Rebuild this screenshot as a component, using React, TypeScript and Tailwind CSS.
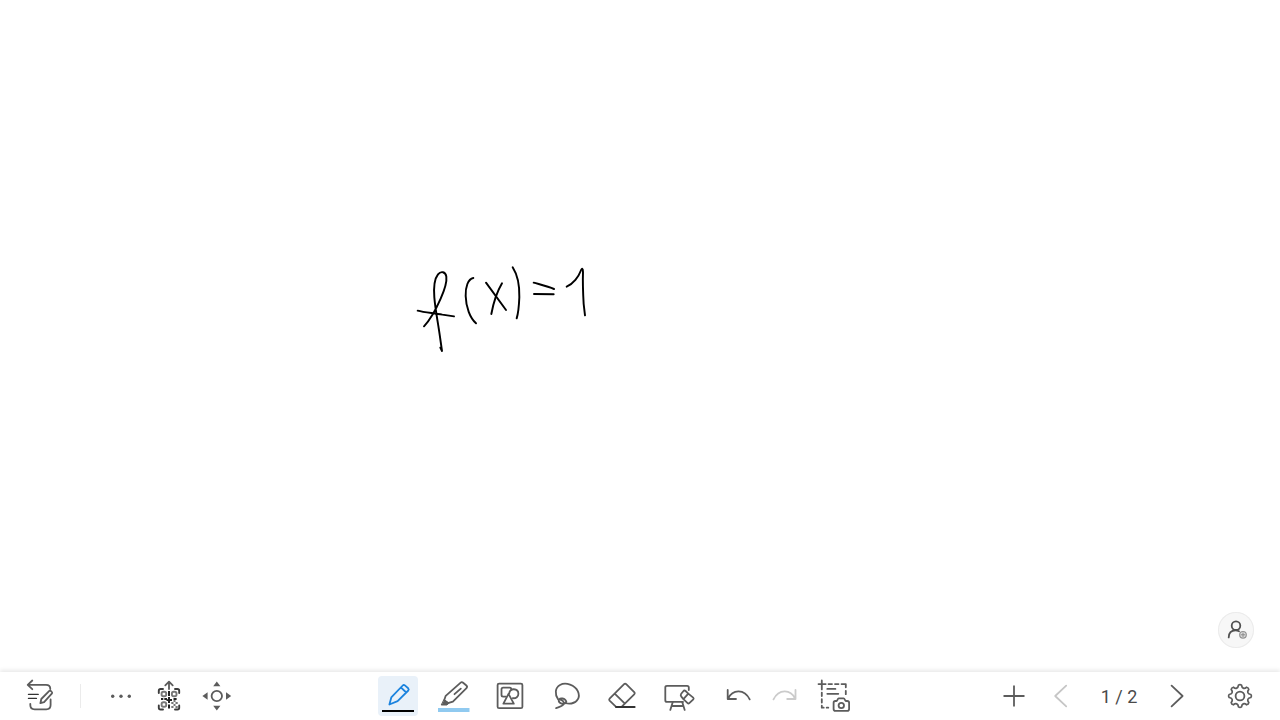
import type { ReactNode } from "react";

type ToolProps = {
  label: string;
  children: ReactNode;
  className?: string;
  disabled?: boolean;
};

function Tool({ label, children, className = "text-[#5c5c5c]", disabled }: ToolProps) {
  return (
    <button
      type="button"
      aria-label={label}
      disabled={disabled}
      className={`h-10 w-10 shrink-0 rounded-[4px] ${className}`}
    >
      <svg
        viewBox="0 0 40 40"
        className="block h-10 w-10"
        fill="none"
        stroke="currentColor"
        strokeWidth="1.8"
        strokeLinecap="round"
        strokeLinejoin="round"
        aria-hidden="true"
      >
        {children}
      </svg>
    </button>
  );
}

const gearPoint = (degrees: number, radius: number) => {
  const angle = (degrees * Math.PI) / 180;
  return `${(20 + radius * Math.sin(angle)).toFixed(2)} ${(20 - radius * Math.cos(angle)).toFixed(2)}`;
};

// Eight rounded teeth joined by concave valleys.
const gearPath = (() => {
  let path = `M${gearPoint(-8, 11)}`;
  for (let tooth = 0; tooth < 8; tooth++) {
    const at = tooth * 45;
    path += `Q${gearPoint(at, 12)} ${gearPoint(at + 8, 11)}`;
    path += `C${gearPoint(at + 14, 7.9)} ${gearPoint(at + 31, 7.9)} ${gearPoint(at + 37, 11)}`;
  }
  return `${path}Z`;
})();

function Handwriting() {
  return (
    <svg
      viewBox="0 0 570 300"
      role="img"
      aria-label="f(x) = 1"
      className="absolute top-[260px] left-[410px] h-[100px] w-[190px]"
      fill="none"
      stroke="#000"
      strokeWidth="5.8"
      strokeLinecap="round"
      strokeLinejoin="round"
    >
      <path d="M42 199C62 178 78 148 92 116C104 89 111 65 109 50C107 34 92 33 84 43C72 58 71 86 73 112C76 150 84 187 89 224L96 273L91 263" />
      <path d="M23 152C45 158 72 159 97 164L132 169" />
      <path d="M190 54C174 57 166 81 167 108C168 142 180 174 198 190" />
      <path d="M228 68L288 150" />
      <path d="M276 70C260 97 250 130 244 162" />
      <path d="M308 22C322 44 329 78 328 112C327 137 325 160 320 175" />
      <path d="M371 68C392 74 414 79 432 87M372 102L431 103" />
      <path d="M470 80C490 71 506 50 512 33C516 23 519 25 519 36C518 65 519 98 521 132L525 166" />
    </svg>
  );
}

export default function App() {
  return (
    <div className="flex min-h-screen flex-col bg-white font-['Roboto','Liberation_Sans',sans-serif]">
      <main className="relative flex flex-1 items-end justify-end">
        <Handwriting />
        <button
          type="button"
          aria-label="Add participant"
          className="mr-[26px] mb-6 h-9 w-9 rounded-full bg-[#f7f7f7] text-[#505050] ring-1 ring-[#ebebeb] ring-inset"
        >
          <svg
            viewBox="0 0 36 36"
            className="block h-9 w-9"
            fill="none"
            stroke="currentColor"
            strokeWidth="1.8"
            strokeLinecap="round"
            aria-hidden="true"
          >
            <circle cx="18" cy="13.7" r="4.3" />
            <path d="M10.7 25.4C10.8 21 13.5 18.4 17.5 18.4C19 18.4 20 18.8 21 19.3" />
            <circle cx="25" cy="22.8" r="3.3" fill="#ddd" stroke="#929292" strokeWidth="1.2" />
            <path d="M23.2 22.8H26.8M25 21V24.6" stroke="#888" strokeWidth="1" />
          </svg>
        </button>
      </main>

      <nav
        aria-label="Whiteboard tools"
        className="relative flex h-12 shrink-0 items-center justify-between bg-white px-5 shadow-[0_-2px_4px_rgba(0,0,0,0.09)]"
      >
        <div className="flex items-center">
          <Tool label="Exit board">
            <path d="M12.3 4.5L7.7 8.8L12.3 13.2M8 8.8H26C29 8.8 30.3 10.5 30.3 13" />
            <path d="M10.3 27.8V29C10.3 31.8 11.8 33.3 14.6 33.3H26.3C29.2 33.3 30.6 31.8 30.6 29V23.5" />
            <path d="M8.5 18.4H18.2M8.5 22.4H16.4" stroke="#333" strokeWidth="1.4" />
            <path d="M20.4 27.2L21.3 23L29.3 14.8C30.3 13.9 32.8 16.3 32 17.4L24.1 26.1Z" />
          </Tool>
          <div className="mx-5 h-6 w-px bg-[#ebebeb]" />
          <div className="flex gap-2">
            <Tool label="More">
              <g fill="currentColor" stroke="none">
                <circle cx="11.7" cy="20.2" r="1.7" />
                <circle cx="20" cy="20.2" r="1.7" />
                <circle cx="28.3" cy="20.2" r="1.7" />
              </g>
            </Tool>
            <Tool label="Share by QR code">
              <path d="M20 5.8V13M16.3 9.3L20 5.6L23.7 9.3" />
              <path
                d="M9.8 17V14.8C9.8 13.6 10.4 13 11.6 13H14M26 13H28.4C29.6 13 30.2 13.6 30.2 14.8V17M9.8 29.5V31.7C9.8 32.9 10.4 33.5 11.6 33.5H14M26 33.5H28.4C29.6 33.5 30.2 32.9 30.2 31.7V29.5"
                stroke="#3c3c3c"
                strokeWidth="1.9"
              />
              <g stroke="#777" strokeWidth="1.9">
                <rect x="12.6" y="15.7" width="4.6" height="4.6" rx="1.8" />
                <rect x="22.9" y="15.7" width="4.6" height="4.6" rx="1.8" />
                <rect x="12.6" y="26.2" width="4.6" height="4.6" rx="1.8" />
              </g>
              <g fill="#222" stroke="none">
                <path d="M19 15H21V20H19ZM12 22H14.3V24H12ZM15.3 22H18V24H15.3ZM19 21H21V23H23V25H21V27H19V25H17.5V23.3H19ZM24.5 22H27.6V24H24.5ZM19 28.5H21V32.5H19Z" />
                <path
                  d="M22.3 26H24.5V28H22.3ZM26.5 26H28.7V28H26.5ZM24.5 28H26.5V30H24.5ZM22.3 30H24.5V32H22.3ZM26.5 30H28.7V32H26.5ZM24.5 24H26.5V26H24.5Z"
                  fill="#777"
                />
              </g>
            </Tool>
            <Tool label="Move canvas">
              <circle cx="19.8" cy="20" r="5.2" />
              <path
                d="M19.8 5.6L23.4 10.2H16.2ZM19.8 34.4L23.4 29.8H16.2ZM5.4 20L10.6 16.2V23.8ZM34.2 20L29 16.2V23.8Z"
                fill="currentColor"
                stroke="none"
              />
            </Tool>
          </div>
        </div>

        <div className="flex items-center">
          <div className="flex gap-4">
            <Tool label="Pen" className="bg-[#e9f1f9] text-[#1b83de]">
              <path d="M11.4 28.5L13.3 21.4L24.7 9.5C25.4 8.8 26.2 8.8 26.9 9.4L30.2 12.3C30.9 13 30.9 13.8 30.3 14.5L19.6 25.2ZM22.9 11.4L28.2 16.5" />
              <path d="M4 35H36" stroke="#000" strokeWidth="2" strokeLinecap="butt" />
            </Tool>
            <Tool label="Highlighter">
              <path d="M4 34H35.5" stroke="#90caf0" strokeWidth="4" strokeLinecap="butt" />
              <path d="M10.2 24.2L11.7 19.8L26.4 6.8C27.3 6 28.3 6 29.1 6.7L32.4 9.5C33.3 10.3 33.2 11.3 32.5 12.2L18.9 25.6L13.9 27.2ZM20.5 18.2L26.8 12.6" />
              <path d="M10.2 23.8L15.1 27.1L12.8 29H7.6Z" fill="currentColor" strokeWidth="1" />
            </Tool>
            <Tool label="Shapes">
              <rect x="7.6" y="7.6" width="24.8" height="24.6" rx="1.5" />
              <path d="M15.8 20.6H13.1C12 20.6 11.5 20.1 11.5 19V13.3C11.5 12.2 12 11.7 13.1 11.7H19.7C20.8 11.7 21.3 12.2 21.3 13.3" />
              <path d="M19.3 17.2C19.5 11.8 28.2 11.9 28.4 17.8C28.5 20.6 26 22.6 22.8 22.2" />
              <path d="M18.5 17.8L13.4 27.7H23.8Z" />
            </Tool>
            <Tool label="Lasso">
              <path d="M12.2 23.6C8.4 18 9.1 11.8 14 9C19.8 5.6 29 9.2 31.9 15.3C34.5 21 31.5 26.5 25.5 27.5C23.2 27.9 21 27.6 18.9 27" />
              <path d="M20.4 26C19.5 22.2 13.3 20.8 12.8 24.3C12.4 27.3 18.2 29.4 20.1 26.3M14.8 23.9C16.1 24.1 17.6 25.7 17.9 27.3C18 30.1 13.5 31 10.1 32.1" />
            </Tool>
            <Tool label="Eraser">
              <path d="M14.1 30.8L7.6 24.7C7 24 7 23.3 7.6 22.6L22.1 8.2C22.8 7.5 23.5 7.5 24.2 8.2L32.2 16.2C32.9 16.9 32.9 17.6 32.2 18.3L19.8 30.7M12.7 17.6L22.9 27.7" />
              <path d="M14 31H32.7" stroke="#333" />
            </Tool>
            <Tool label="Clear board">
              <path d="M30.8 14V11.5C30.8 10.4 30.2 9.8 29.1 9.8H9C7.9 9.8 7.3 10.4 7.3 11.5V24.2C7.3 25.3 7.9 25.9 9 25.9H25" />
              <path d="M14.7 26.2L12.3 33.9M24.3 26.2L26.7 33.9M13.7 30H25.3" />
              <path d="M30.3 17.6L35.2 21.6C35.8 22.2 35.8 22.7 35.3 23.3L31.3 27.1C30.7 27.7 30.2 27.7 29.6 27.1L25.4 23.2ZM25.4 23.2L23.2 20.4C22.4 19.4 22.5 18.8 23.2 17.8L25.3 15.2C26 14.3 26.8 14.3 27.6 15L30.3 17.6" />
            </Tool>
          </div>
          <div className="ml-5 flex gap-2">
            <Tool label="Undo">
              <path d="M9.7 14V23H18M10.3 22.4C14.5 13.1 26.4 12.6 31.7 23.4" />
            </Tool>
            <Tool label="Redo" className="text-[#cbcbcb]" disabled>
              <path d="M29.5 14V23H21.2M28.9 22.4C24.7 13.1 12.8 12.6 7.5 23.4" />
            </Tool>
            <Tool label="Capture area">
              <path d="M7.8 4.4V13.4M4.5 8.1H11.7" />
              <path d="M14.5 8.1H18M21 8.1H24.5M27.5 8.1H31.8V11.3M31.8 14.8V18.2M7.8 16.6V20M7.8 23.2V26.6M7.8 29.7V31.7H9.7M12.7 31.7H14.3" />
              <path d="M13.3 12.9H21.4M13.3 17.8H24.3" />
              <path d="M21.4 25H22.5C23.4 25 23.6 22.4 24.7 22.4H29.7C30.8 22.4 31 25 31.9 25H33.2C34.5 25 35.1 25.6 35.1 26.8V32.9C35.1 34.2 34.5 34.8 33.2 34.8H21.4C20.2 34.8 19.6 34.2 19.6 32.9V26.8C19.6 25.6 20.2 25 21.4 25Z" />
              <circle cx="27.3" cy="29.5" r="2.7" />
            </Tool>
          </div>
        </div>

        <div className="flex items-center">
          <div className="flex gap-2">
            <Tool label="Add page">
              <path d="M9.5 20H30.5M20 9.5V30.5" strokeLinecap="butt" />
            </Tool>
            <Tool label="Previous page" className="text-[#c6c6c6]" disabled>
              <path d="M24.2 9.6L13.2 20L24.2 30.4" />
            </Tool>
          </div>
          <span className="w-[74px] pt-0.5 text-center text-lg leading-6 whitespace-nowrap text-[#4a4a4a]">1 / 2</span>
          <Tool label="Next page">
            <path d="M15.6 9.6L26.6 20L15.6 30.4" />
          </Tool>
          <div className="ml-6 flex">
            <Tool label="Settings">
              <path d={gearPath} strokeWidth="1.7" />
              <circle cx="20" cy="20" r="4.4" />
            </Tool>
          </div>
        </div>
      </nav>
    </div>
  );
}
